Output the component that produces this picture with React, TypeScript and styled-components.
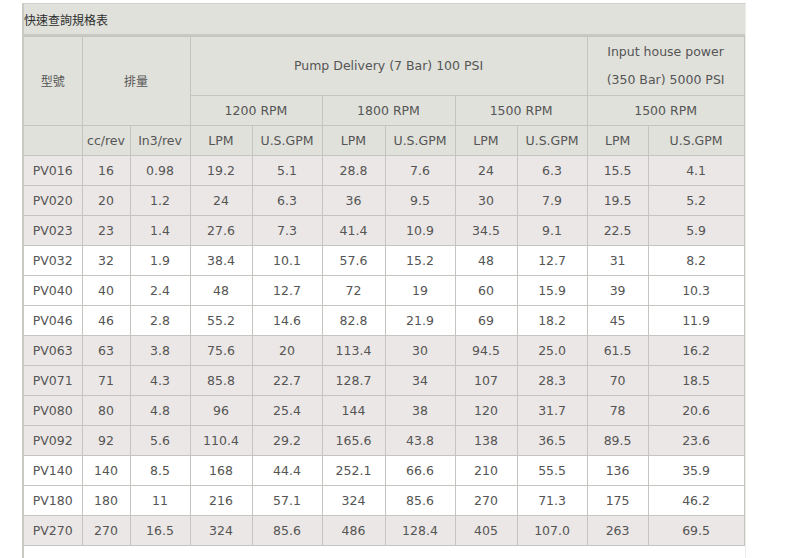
import React from "react";
import styled, { createGlobalStyle } from "styled-components";

const Global = createGlobalStyle`
  html, body { margin: 0; padding: 0; background: #ffffff; }
  body { font-family: "DejaVu Sans", Verdana, sans-serif; }
`;

const Panel = styled.div`
  margin: 3px 0 0 22px;
  width: 721px;
  border-left: 2px solid #c9cac4;
  border-top: 1px solid #cfd0ca;
  border-right: 1px solid #ecece8;
  padding-bottom: 14px;
`;

const TitleBar = styled.div`
  height: 29px;
  background: #e0e1db;
  border-bottom: 2px solid #c8c9c3;
  display: flex;
  align-items: center;
  padding-top: 1px;
  font-family: "Noto Sans CJK TC", "Noto Sans CJK SC", sans-serif;
  font-size: 12px;
  color: #2e2e2e;
`;

const Table = styled.table`
  border-collapse: collapse;
  width: 720px;
  table-layout: fixed;
  font-size: 12.5px;
  color: #555555;
`;

const Th = styled.th`
  background: #e0e1db;
  border: 1px solid #c4c5c0;
  font-weight: normal;
  text-align: center;
  padding: 0;
  line-height: 28px;
  &:first-child { border-left: none; }
`;

const HeadRow = styled.tr<{ $h: number }>`
  height: ${(p) => p.$h}px;
`;

const Row = styled.tr<{ $shade: boolean }>`
  height: 30px;
  background: ${(p) => (p.$shade ? "#ebe7e6" : "#ffffff")};
`;

const Td = styled.td`
  border: 1px solid #c4c5c0;
  text-align: center;
  padding: 0;
  &:first-child { border-left: none; }
`;

const colWidths = [58, 48, 60, 62, 70, 63, 70, 62, 70, 61, 96];

const data: string[][] = [
  ["PV016", "16", "0.98", "19.2", "5.1", "28.8", "7.6", "24", "6.3", "15.5", "4.1"],
  ["PV020", "20", "1.2", "24", "6.3", "36", "9.5", "30", "7.9", "19.5", "5.2"],
  ["PV023", "23", "1.4", "27.6", "7.3", "41.4", "10.9", "34.5", "9.1", "22.5", "5.9"],
  ["PV032", "32", "1.9", "38.4", "10.1", "57.6", "15.2", "48", "12.7", "31", "8.2"],
  ["PV040", "40", "2.4", "48", "12.7", "72", "19", "60", "15.9", "39", "10.3"],
  ["PV046", "46", "2.8", "55.2", "14.6", "82.8", "21.9", "69", "18.2", "45", "11.9"],
  ["PV063", "63", "3.8", "75.6", "20", "113.4", "30", "94.5", "25.0", "61.5", "16.2"],
  ["PV071", "71", "4.3", "85.8", "22.7", "128.7", "34", "107", "28.3", "70", "18.5"],
  ["PV080", "80", "4.8", "96", "25.4", "144", "38", "120", "31.7", "78", "20.6"],
  ["PV092", "92", "5.6", "110.4", "29.2", "165.6", "43.8", "138", "36.5", "89.5", "23.6"],
  ["PV140", "140", "8.5", "168", "44.4", "252.1", "66.6", "210", "55.5", "136", "35.9"],
  ["PV180", "180", "11", "216", "57.1", "324", "85.6", "270", "71.3", "175", "46.2"],
  ["PV270", "270", "16.5", "324", "85.6", "486", "128.4", "405", "107.0", "263", "69.5"],
];

const shaded = [true, true, true, false, false, false, true, true, true, true, false, false, true];

const CJK = styled.span`
  font-family: "Noto Sans CJK TC", "Noto Sans CJK SC", sans-serif;
  font-size: 12px;
`;

export default function App() {
  return (
    <>
      <Global />
      <Panel>
        <TitleBar>快速查詢規格表</TitleBar>
        <Table>
          <colgroup>
            {colWidths.map((w, i) => (
              <col key={i} style={{ width: w }} />
            ))}
          </colgroup>
          <thead>
            <HeadRow $h={59}>
              <Th rowSpan={2}>
                <CJK>型號</CJK>
              </Th>
              <Th rowSpan={2} colSpan={2}>
                <CJK>排量</CJK>
              </Th>
              <Th colSpan={6}>Pump Delivery (7 Bar) 100 PSI</Th>
              <Th colSpan={2}>
                Input house power
                <br />
                (350 Bar) 5000 PSI
              </Th>
            </HeadRow>
            <HeadRow $h={30}>
              <Th colSpan={2}>1200 RPM</Th>
              <Th colSpan={2}>1800 RPM</Th>
              <Th colSpan={2}>1500 RPM</Th>
              <Th colSpan={2}>1500 RPM</Th>
            </HeadRow>
            <HeadRow $h={30}>
              <Th></Th>
              <Th>cc/rev</Th>
              <Th>In3/rev</Th>
              <Th>LPM</Th>
              <Th>U.S.GPM</Th>
              <Th>LPM</Th>
              <Th>U.S.GPM</Th>
              <Th>LPM</Th>
              <Th>U.S.GPM</Th>
              <Th>LPM</Th>
              <Th>U.S.GPM</Th>
            </HeadRow>
          </thead>
          <tbody>
            {data.map((r, i) => (
              <Row key={r[0]} $shade={shaded[i]}>
                {r.map((c, j) => (
                  <Td key={j}>{c}</Td>
                ))}
              </Row>
            ))}
          </tbody>
        </Table>
      </Panel>
    </>
  );
}
